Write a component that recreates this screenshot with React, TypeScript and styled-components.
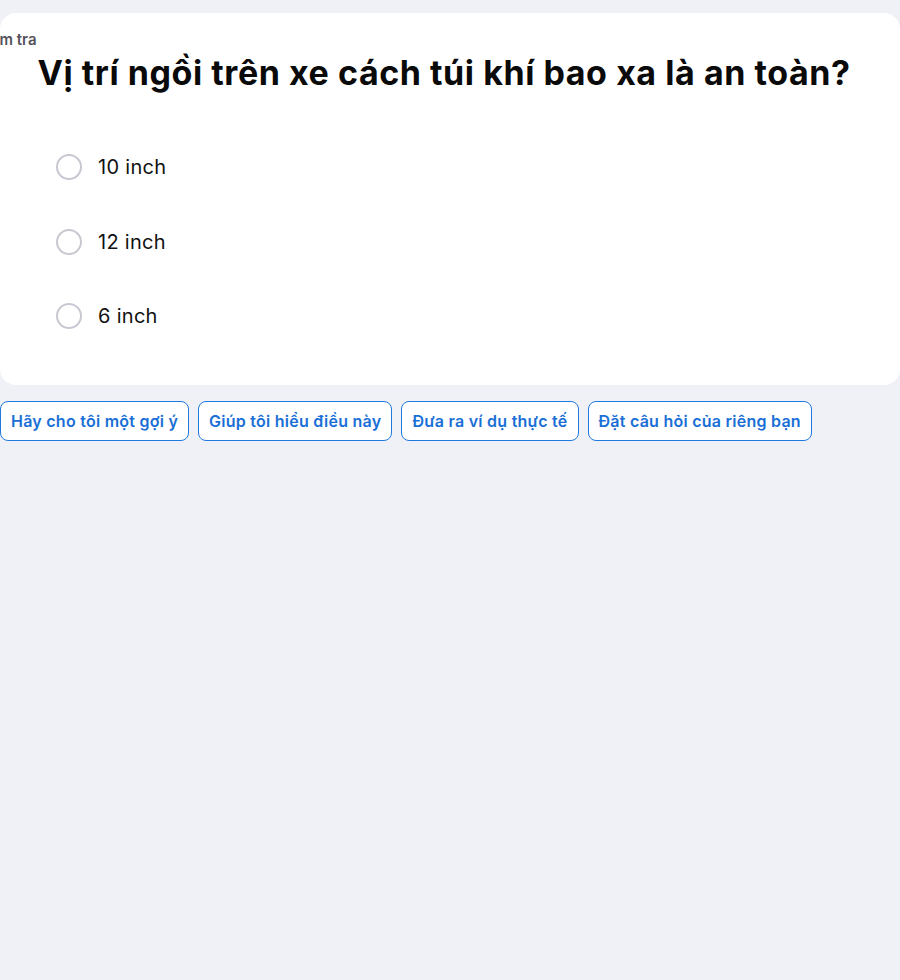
import React from 'react';
import styled, {createGlobalStyle} from 'styled-components';

const Global = createGlobalStyle`
  html, body {
    margin: 0;
    background: #f0f1f6;
  }
  body {
    font-family: Inter, "Noto Sans", sans-serif;
    overflow: hidden;
  }
`;

const Page = styled.div`
  width: 900px;
  height: 980px;
  padding-top: 13px;
  box-sizing: border-box;
`;

const Card = styled.div`
  background: #fff;
  border-radius: 16px;
  height: 372px;
  box-sizing: border-box;
  padding: 18px 0 0;
`;

const Label = styled.div`
  margin-left: -24px;
  font-size: 15px;
  font-weight: 600;
  color: #55535a;
  line-height: 18px;
`;

const Title = styled.h1`
  margin: 2px 0 0;
  padding-right: 12px;
  text-align: center;
  font-size: 34px;
  font-weight: 700;
  letter-spacing: 0.55px;
  color: #0a0a0a;
  line-height: 44px;
`;

const Options = styled.ul`
  list-style: none;
  margin: 59px 0 0;
  padding: 0 0 0 56px;
  display: flex;
  flex-direction: column;
  gap: 48.5px;
`;

const Option = styled.li`
  display: flex;
  align-items: center;
  gap: 16px;
  height: 26px;
  font-size: 20px;
  letter-spacing: 0.3px;
  color: #111;
`;

const Radio = styled.span`
  width: 26px;
  height: 26px;
  box-sizing: border-box;
  border: 2px solid #c9c8d2;
  border-radius: 50%;
`;

const Chips = styled.div`
  display: flex;
  gap: 9px;
  margin-top: 16px;
`;

const Chip = styled.button`
  height: 40px;
  padding: 0 10px;
  background: #fff;
  border: 1px solid #1f7ae0;
  border-radius: 8px;
  font-family: Inter, "Noto Sans", sans-serif;
  font-size: 16px;
  font-weight: 600;
  letter-spacing: 0.25px;
  color: #1a6fd6;
  cursor: pointer;
`;

const answers = ['10 inch', '12 inch', '6 inch'];
const prompts = [
  'Hãy cho tôi một gợi ý',
  'Giúp tôi hiểu điều này',
  'Đưa ra ví dụ thực tế',
  'Đặt câu hỏi của riêng bạn',
];

export default function App() {
  return (
    <Page>
      <Global />
      <Card>
        <Label>Kiểm tra</Label>
        <Title>Vị trí ngồi trên xe cách túi khí bao xa là an toàn?</Title>
        <Options>
          {answers.map(a => (
            <Option key={a}>
              <Radio />
              {a}
            </Option>
          ))}
        </Options>
      </Card>
      <Chips>
        {prompts.map(p => (
          <Chip key={p}>{p}</Chip>
        ))}
      </Chips>
    </Page>
  );
}
